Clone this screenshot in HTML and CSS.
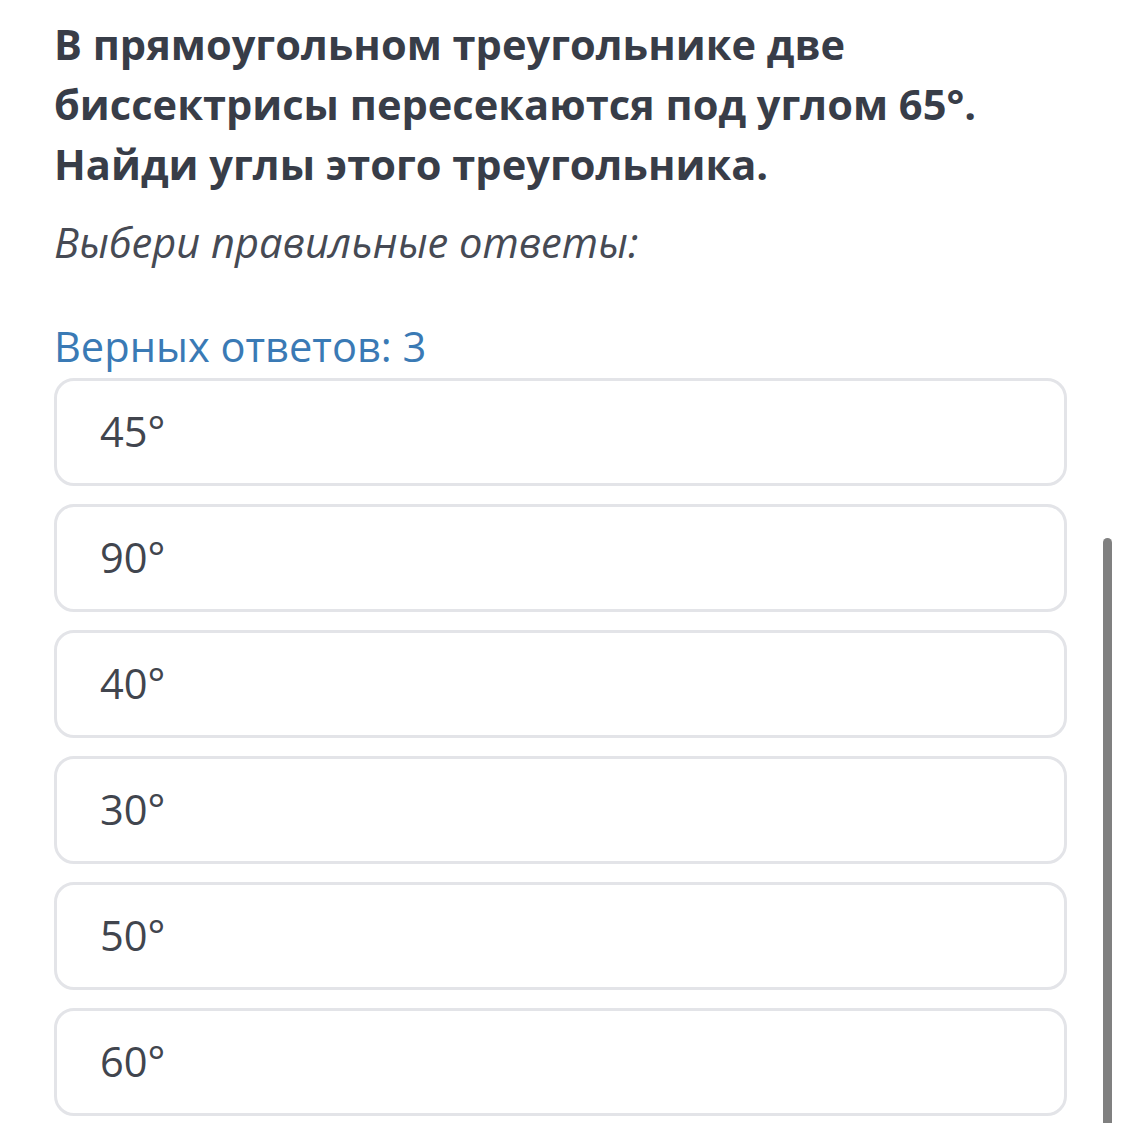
FILE: index.html
```html
<!DOCTYPE html>
<html lang="ru">
<head>
<meta charset="utf-8">
<link rel="stylesheet" href="styles.css">
</head>
<body>
<main class="page">
  <h1 class="question">В прямоугольном треугольнике две биссектрисы пересекаются под углом 65°. Найди углы этого треугольника.</h1>
  <p class="hint">Выбери правильные ответы:</p>
  <p class="count">Верных ответов: 3</p>
  <ul class="options">
    <li class="option">45°</li>
    <li class="option">90°</li>
    <li class="option">40°</li>
    <li class="option">30°</li>
    <li class="option">50°</li>
    <li class="option">60°</li>
  </ul>
</main>
<div class="scrollbar"></div>
</body>
</html>
```

FILE: styles.css
```css
html, body {
  margin: 0;
  padding: 0;
  background: #ffffff;
}
body {
  font-family: "Open Sans", "Noto Sans", sans-serif;
  overflow: hidden;
  height: 1123px;
}
.page {
  padding: 14px 55px 0 54px;
}
.question {
  margin: 0;
  font-size: 41.6px;
  line-height: 60px;
  font-weight: 700;
  color: #383d48;
  max-width: 980px;
}
.hint {
  margin: 18px 0 0 0;
  font-size: 41.6px;
  line-height: 60px;
  font-style: italic;
  font-weight: 400;
  color: #464a54;
}
.count {
  margin: 44px 0 2px 0;
  font-size: 41.6px;
  line-height: 60px;
  color: #3a7ab5;
}
.options {
  list-style: none;
  margin: 0;
  padding: 0;
  display: flex;
  flex-direction: column;
  gap: 18px;
}
.option {
  box-sizing: border-box;
  height: 108px;
  border: 3px solid #e3e4e8;
  border-radius: 20px;
  padding: 0 0 2px 43px;
  display: flex;
  align-items: center;
  font-size: 41.6px;
  line-height: 60px;
  color: #41454e;
}
.scrollbar {
  position: fixed;
  left: 1103px;
  top: 538px;
  width: 9px;
  height: 600px;
  background: #808080;
  border-radius: 5px 5px 0 0;
}
```
